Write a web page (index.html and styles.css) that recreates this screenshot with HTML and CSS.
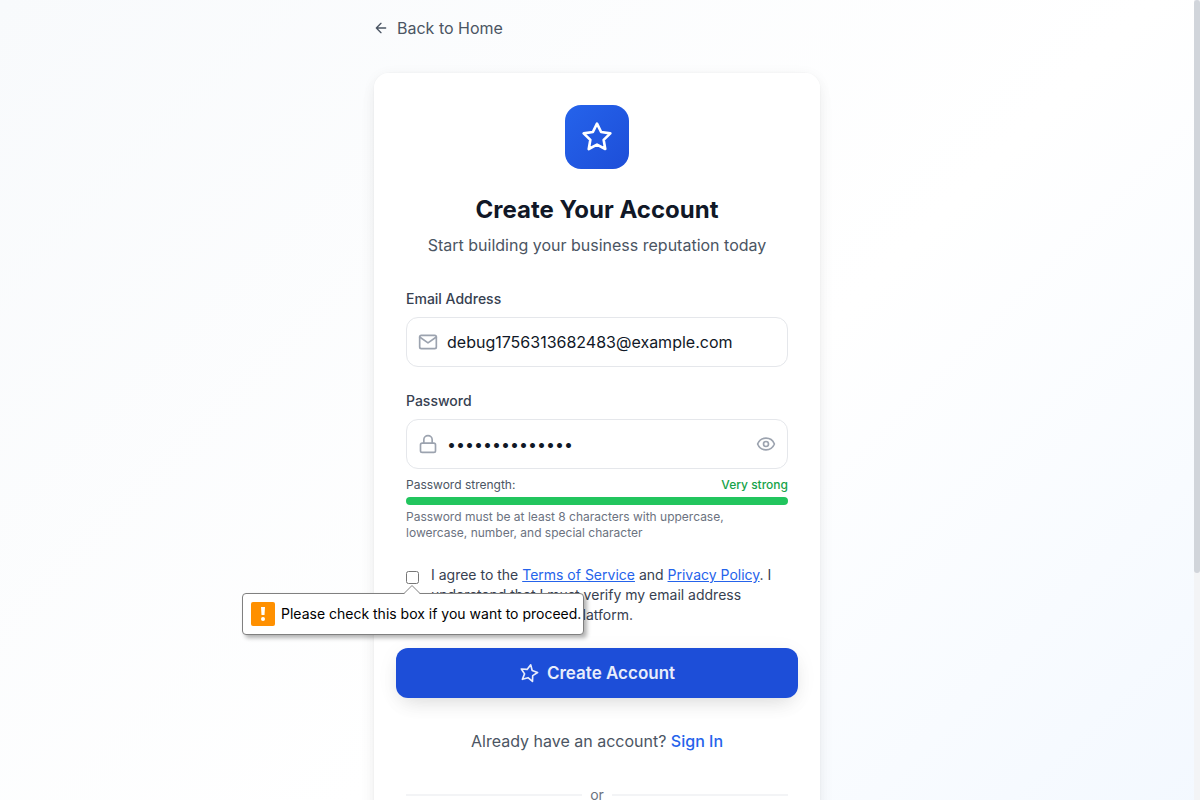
FILE: index.html
```html
<!DOCTYPE html>
<html lang="en">
<head>
<meta charset="utf-8">
<meta name="viewport" content="width=device-width, initial-scale=1">
<title>Create Your Account</title>
<link rel="stylesheet" href="styles.css">
</head>
<body>
<main class="page">
  <div class="column">
    <a class="back-link" href="#home">
      <svg class="icon icon-sm" viewBox="0 0 24 24" aria-hidden="true"><path d="M19 12H5M12 19l-7-7 7-7"/></svg>
      Back to Home
    </a>
    <section class="card">
      <header class="card-header">
        <div class="logo">
          <svg class="icon icon-lg" viewBox="0 0 24 24" aria-hidden="true"><path d="M12 2l3.09 6.26L22 9.27l-5 4.87 1.18 6.88L12 17.77l-6.18 3.25L7 14.14 2 9.27l6.91-1.01L12 2z"/></svg>
        </div>
        <h1 class="title">Create Your Account</h1>
        <p class="subtitle">Start building your business reputation today</p>
      </header>
      <form class="form" novalidate>
        <div class="field">
          <label class="label" for="email">Email Address</label>
          <div class="control">
            <svg class="icon" viewBox="0 0 24 24" aria-hidden="true"><path d="M4 4h16c1.1 0 2 .9 2 2v12c0 1.1-.9 2-2 2H4c-1.1 0-2-.9-2-2V6c0-1.1.9-2 2-2z"/><path d="M22 6l-10 7L2 6"/></svg>
            <input class="input" id="email" type="email" value="debug1756313682483@example.com">
          </div>
        </div>
        <div class="field">
          <label class="label" for="password">Password</label>
          <div class="control">
            <svg class="icon" viewBox="0 0 24 24" aria-hidden="true"><rect x="3" y="11" width="18" height="11" rx="2"/><path d="M7 11V7a5 5 0 0 1 10 0v4"/></svg>
            <input class="input" id="password" type="password" value="Password123!ab">
            <button class="reveal" type="button" aria-label="Show password">
              <svg class="icon" viewBox="0 0 24 24" aria-hidden="true"><path d="M2.062 12.348a1 1 0 0 1 0-.696 10.75 10.75 0 0 1 19.876 0 1 1 0 0 1 0 .696 10.75 10.75 0 0 1-19.876 0"/><circle cx="12" cy="12" r="3"/></svg>
            </button>
          </div>
          <div class="strength">
            <div class="strength-row"><span>Password strength:</span><span class="strength-value">Very strong</span></div>
            <div class="strength-bar"></div>
            <p class="hint">Password must be at least 8 characters with uppercase, lowercase, number, and special character</p>
          </div>
        </div>
        <div class="agree">
          <div class="agree-box">
            <input class="checkbox" id="agree" type="checkbox" aria-describedby="agree-message">
            <div class="bubble" id="agree-message" role="alert">
              <svg class="bubble-arrow" viewBox="0 0 18 9" aria-hidden="true"><path class="arrow-fill" d="M1 9L9 1l8 8z"/><path class="arrow-line" d="M1 8.500L9 .5l8 8"/></svg>
              <svg class="bubble-icon" viewBox="0 0 24 24" aria-hidden="true"><rect width="24" height="24" rx="2" fill="#ff9000"/><path d="M10 5h4l-.5 8h-3z" fill="#fff"/><circle cx="12" cy="17" r="2" fill="#fff"/></svg>
              <span>Please check this box if you want to proceed.</span>
            </div>
          </div>
          <label class="agree-text" for="agree">I agree to the <a href="#terms">Terms of Service</a> and <a href="#privacy">Privacy Policy</a>. I understand that I must verify my email address before accessing the platform.</label>
        </div>
        <button class="submit" type="submit">
          <svg class="icon star-turned" viewBox="0 0 24 24" aria-hidden="true"><path d="M12 2l3.09 6.26L22 9.27l-5 4.87 1.18 6.88L12 17.77l-6.18 3.25L7 14.14 2 9.27l6.91-1.01L12 2z"/></svg>
          Create Account
        </button>
      </form>
      <p class="signin">Already have an account? <a href="#signin">Sign In</a></p>
      <div class="divider"><span>or</span></div>
    </section>
  </div>
</main>
<div class="scrollbar" aria-hidden="true"><div class="scrollbar-thumb"></div></div>
</body>
</html>
```
FILE: styles.css
```css
* { box-sizing: border-box; }

body {
  margin: 0;
  display: flex;
  height: 100vh;
  overflow: hidden;
  font-family: Inter, "Liberation Sans", sans-serif;
  font-size: 16px;
  line-height: 24px;
  color: #111827;
  -webkit-font-smoothing: antialiased;
}

h1, p { margin: 0; }
a { color: #2563eb; }

.page {
  flex: 1;
  display: flex;
  justify-content: center;
  align-items: flex-start;
  min-height: 140vh;
  padding: 16px;
  background: linear-gradient(135deg, #f8fafc 0%, #ffffff 50%, #eff6ff 100%);
}

.column {
  width: 100%;
  max-width: 448px;
  display: flex;
  flex-direction: column;
  align-items: flex-start;
  gap: 32px;
}

.icon {
  width: 20px;
  height: 20px;
  flex: none;
  fill: none;
  stroke: currentColor;
  stroke-width: 2;
  stroke-linecap: round;
  stroke-linejoin: round;
}
.icon-sm { width: 16px; height: 16px; }
.icon-lg { width: 32px; height: 32px; }

.back-link {
  display: flex;
  align-items: center;
  gap: 8px;
  color: #4b5563;
  text-decoration: none;
}

.card {
  width: 100%;
  padding: 32px 32px 64px;
  background: #fff;
  background-clip: padding-box;
  border: 1px solid rgba(0, 0, 0, 0.01);
  border-radius: 16px;
  box-shadow: 0 2px 15px -3px rgba(0, 0, 0, 0.07), 0 10px 20px -2px rgba(0, 0, 0, 0.04);
}

.card-header {
  display: flex;
  flex-direction: column;
  align-items: center;
  text-align: center;
  margin-bottom: 32px;
}
.logo {
  display: grid;
  place-items: center;
  width: 64px;
  height: 64px;
  margin-bottom: 24px;
  color: #fff;
  background: linear-gradient(135deg, #2563eb, #1d4ed8);
  border-radius: 16px;
}
.title { font-size: 24px; line-height: 34px; font-weight: 700; margin-bottom: 6px; }
.subtitle { color: #4b5563; }

.form { display: flex; flex-direction: column; gap: 24px; }
.field { display: flex; flex-direction: column; gap: 8px; }
.label { font-size: 14px; line-height: 20px; font-weight: 500; color: #374151; }

.control {
  display: flex;
  align-items: center;
  gap: 9px;
  padding: 0 11px;
  border: 1px solid #e5e7eb;
  border-radius: 12px;
  color: #9ca3af;
}
.input {
  flex: 1;
  min-width: 0;
  height: 48px;
  padding: 0;
  border: 0;
  outline: 0;
  background: transparent;
  color: #111827;
  font: inherit;
}
.reveal { display: flex; padding: 0; border: 0; background: none; color: inherit; }

.strength { font-size: 12px; line-height: 16px; color: #4b5563; }
.strength-row { display: flex; justify-content: space-between; }
.strength-value { color: #16a34a; font-weight: 500; }
.strength-bar { height: 8px; margin: 4px 0; border-radius: 4px; background: #22c55e; }
.hint { color: #6b7280; }

.agree { display: flex; align-items: flex-start; gap: 12px; }
.agree-box { position: relative; display: flex; padding-top: 6px; }
.checkbox { width: 13px; height: 13px; margin: 0; }
.agree-text { font-size: 14px; line-height: 20px; color: #374151; }

.bubble {
  position: absolute;
  z-index: 2;
  top: 28px;
  left: -164px;
  display: flex;
  align-items: center;
  gap: 6px;
  height: 42px;
  padding: 0 2px 0 8px;
  border: 1px solid #808080;
  border-radius: 4px;
  background: #fff;
  color: #000;
  font-size: 14px;
  line-height: 20px;
  white-space: nowrap;
  box-shadow: 3px 3px 4px rgba(0, 0, 0, 0.3);
}
.bubble-icon { width: 24px; height: 24px; }
.bubble-arrow { position: absolute; top: -9px; left: 160px; width: 18px; height: 9px; }
.arrow-fill { fill: #fff; }
.arrow-line { fill: none; stroke: #808080; stroke-width: 1; }

.submit {
  display: flex;
  justify-content: center;
  align-items: center;
  gap: 8px;
  height: 50px;
  margin: -1px -10px;
  border: 0;
  border-radius: 12px;
  background: #1d4ed8;
  color: #e8edfb;
  font: 600 17px/24px Inter, "Liberation Sans", sans-serif;
  box-shadow: 0 4px 25px -5px rgba(0, 0, 0, 0.1), 0 10px 20px -5px rgba(0, 0, 0, 0.08);
}
.star-turned { transform: rotate(12deg); }

.signin { margin-top: 32px; text-align: center; color: #4b5563; }
.signin a { font-weight: 500; text-decoration: none; }

.divider {
  display: flex;
  align-items: center;
  gap: 8px;
  margin-top: 32px;
  font-size: 14px;
  line-height: 20px;
  color: #6b7280;
}
.divider::before, .divider::after { content: ""; flex: 1; height: 2px; background: #f3f4f6; }

.scrollbar { width: 6px; background: #f3f4f6; }
.scrollbar-thumb { height: 71.6%; border-radius: 3px; background: #d1d5db; }
```
